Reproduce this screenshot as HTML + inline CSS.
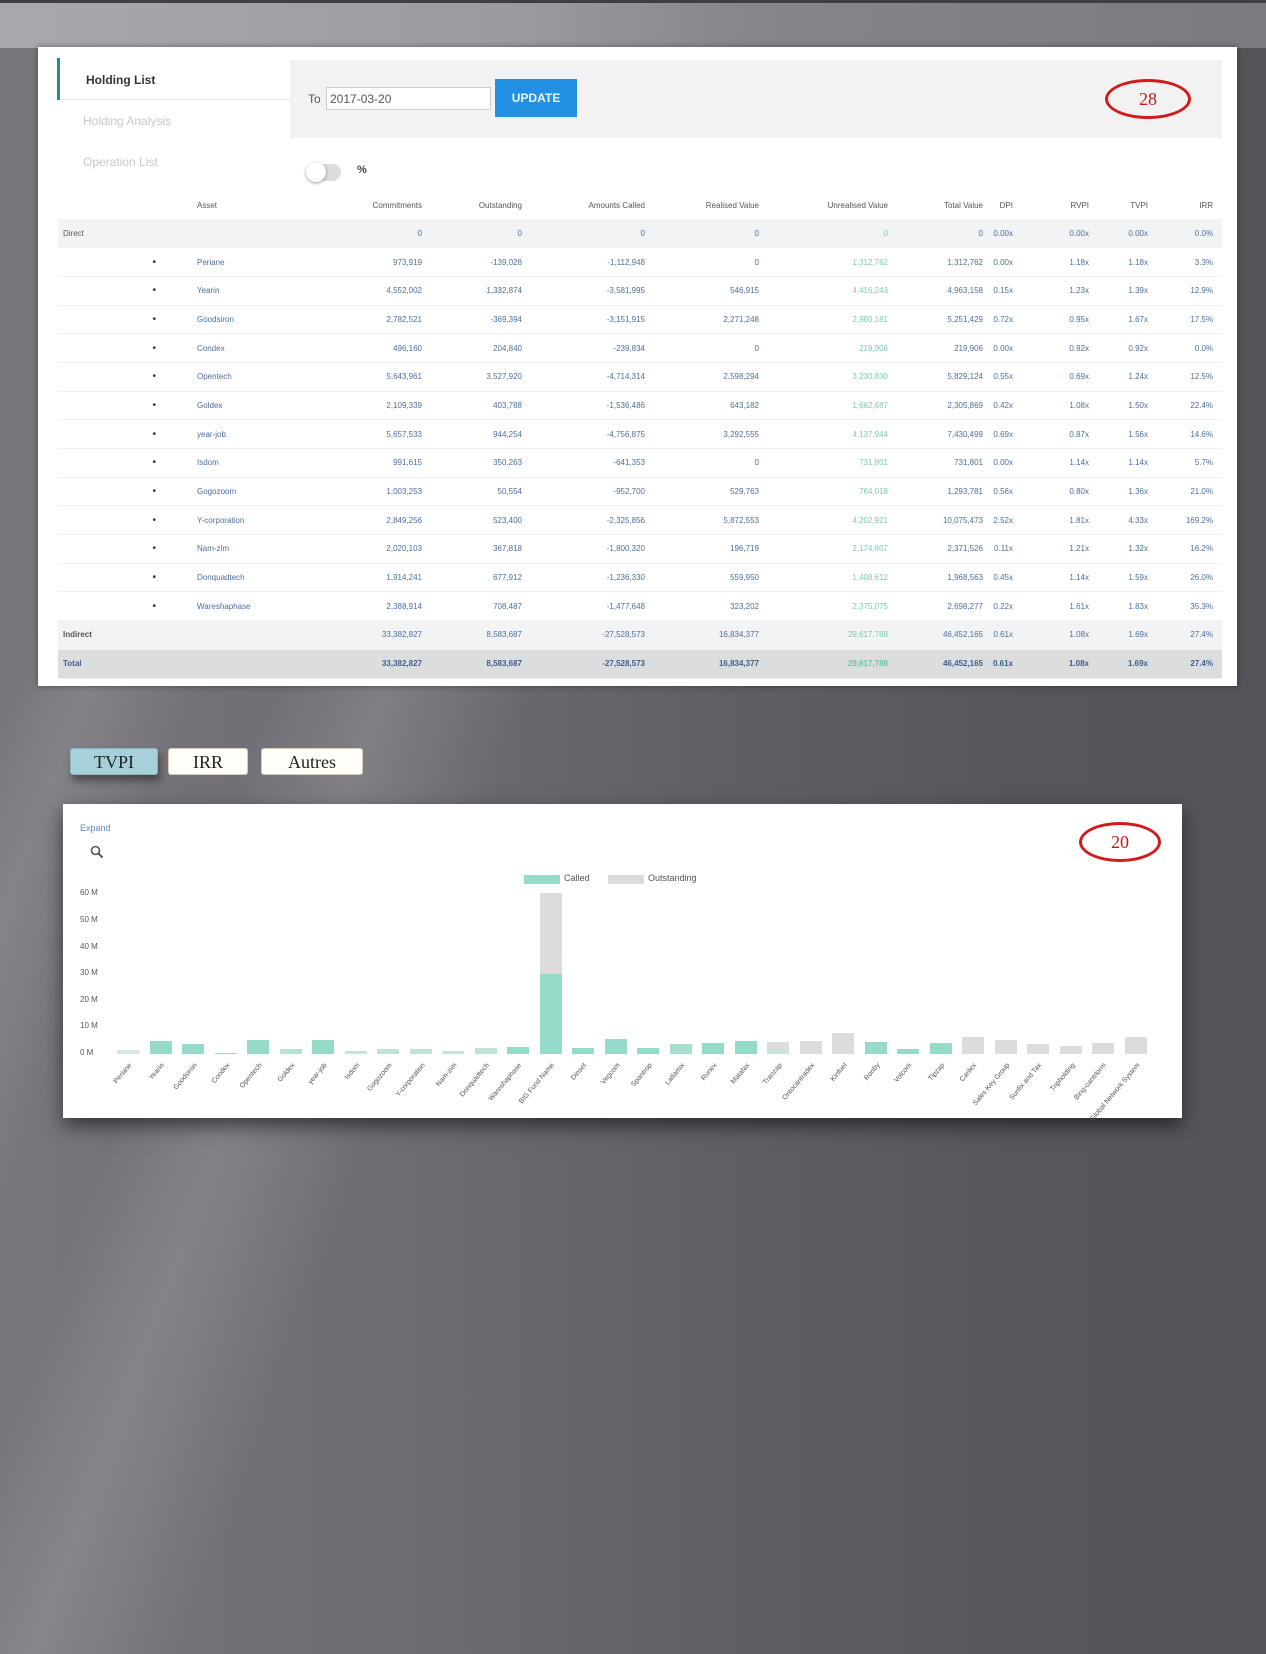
<!DOCTYPE html>
<html><head><meta charset="utf-8"><style>
*{margin:0;padding:0;box-sizing:border-box}
html,body{width:1266px;height:1654px;overflow:hidden}
body{position:relative;font-family:"Liberation Sans",sans-serif;
background:
linear-gradient(110deg,rgba(255,255,255,0) 0%,rgba(255,255,255,0) 14%,rgba(255,255,255,0.10) 18%,rgba(255,255,255,0) 24%,rgba(255,255,255,0) 28%,rgba(255,255,255,0.12) 34%,rgba(255,255,255,0) 42%),
linear-gradient(90deg,#78767c 0%,#6f6d73 30%,#616066 55%,#58565c 80%,#56545a 100%);}
.topband{position:absolute;left:0;top:0;width:1266px;height:48px;background:linear-gradient(90deg,#a9a8ac 0%,#9c9ba0 40%,#86858a 60%,#7b7a7f 100%);border-top:3px solid #3f3e43}
.abs{position:absolute}
.card{position:absolute;left:38px;top:47px;width:1199px;height:639px;background:#fff;box-shadow:0 0 6px rgba(0,0,0,.4)}
.nav{position:absolute;font-size:12px}
table{position:absolute;left:58px;top:191px;width:1164px;border-collapse:collapse;table-layout:fixed;font-size:8px;color:#4d6e99}
td{height:28.7px;text-align:right;white-space:nowrap;overflow:visible;border-bottom:1px solid #eef0f2}
td.l{text-align:left;padding-left:5px;color:#555}
td.a{text-align:left;padding-left:9px}
td.d{text-align:right;padding-right:32px;color:#333;font-size:10px}
td.u{color:#7cc9b6}
tr.h td{color:#555;font-size:8px;height:28px;border-bottom:none}
tr.g td{background:#f2f3f4}
tr.t td{background:#dcdddf;font-weight:bold;color:#3f5f8a}
tr.t td.u{color:#6cc2ad}
.btn{position:absolute;height:27px;font-family:"Liberation Serif",serif;font-size:18px;text-align:center;line-height:26px;color:#222;background:#fffdf8;border:1px solid #d8cdb0;border-radius:3px}
.chart{position:absolute;left:63px;top:804px;width:1119px;height:314px;background:#fff;box-shadow:0 8px 18px rgba(0,0,0,.55)}
.yl{position:absolute;left:80px;font-size:8px;color:#555}
.bar{position:absolute;width:22px}
.lab{position:absolute;font-size:7px;color:#555;transform:rotate(-50deg);transform-origin:right top;white-space:nowrap}
.ell{position:absolute;border:3px solid #d21a1a;border-radius:50%;color:#c81a1a;font-family:"Liberation Serif",serif;font-size:18px;text-align:center}
</style></head><body>
<div class="topband"></div>
<div class="card"></div>
<div class="abs" style="left:57px;top:58px;width:3px;height:42px;background:#2a8a8a"></div>
<div class="abs" style="left:60px;top:99px;width:230px;height:1px;background:#e6e6e6"></div>
<div class="nav" style="left:86px;top:73px;color:#333;font-weight:bold">Holding List</div>
<div class="nav" style="left:83px;top:114px;color:#c4c8cc">Holding Analysis</div>
<div class="nav" style="left:83px;top:155px;color:#c4c8cc">Operation List</div>
<div class="abs" style="left:290px;top:60px;width:932px;height:78px;background:#f2f2f3"></div>
<div class="abs" style="left:308px;top:92px;font-size:12px;color:#555">To</div>
<div class="abs" style="left:326px;top:87px;width:165px;height:23px;background:#fff;border:1px solid #ccc;font-size:12px;color:#555;padding:4px 3px">2017-03-20</div>
<div class="abs" style="left:495px;top:79px;width:82px;height:38px;background:#2391e3;color:#e8f4ff;font-size:12px;font-weight:bold;text-align:center;line-height:38px">UPDATE</div>
<div class="ell" style="left:1105px;top:79px;width:86px;height:40px;line-height:34px">28</div>
<div class="abs" style="left:307px;top:164px;width:34px;height:17px;border-radius:9px;background:#ddd"></div>
<div class="abs" style="left:306px;top:162px;width:20px;height:20px;border-radius:50%;background:#fff;box-shadow:0 1px 3px rgba(0,0,0,.4)"></div>
<div class="abs" style="left:357px;top:164px;font-size:11px;color:#444;font-weight:bold">%</div>
<table>
<colgroup><col style="width:130px"><col style="width:160px"><col style="width:74px"><col style="width:100px"><col style="width:123px"><col style="width:114px"><col style="width:129px"><col style="width:95px"><col style="width:30px"><col style="width:76px"><col style="width:59px"><col style="width:65px"><col style="width:9px"></colgroup>
<tr class="h"><td></td><td class="a">Asset</td><td>Commitments</td><td>Outstanding</td><td>Amounts Called</td><td>Realised Value</td><td>Unrealised Value</td><td>Total Value</td><td>DPI</td><td>RVPI</td><td>TVPI</td><td>IRR</td><td></td></tr>
<tr class="g"><td class="l">Direct</td><td></td><td>0</td><td>0</td><td>0</td><td>0</td><td class="u">0</td><td>0</td><td>0.00x</td><td>0.00x</td><td>0.00x</td><td>0.0%</td><td></td></tr>
<tr><td class="d">•</td><td class="a">Periane</td><td>973,919</td><td>-139,028</td><td>-1,112,948</td><td>0</td><td class="u">1,312,762</td><td>1,312,762</td><td>0.00x</td><td>1.18x</td><td>1.18x</td><td>3.3%</td><td></td></tr>
<tr><td class="d">•</td><td class="a">Yearin</td><td>4,552,002</td><td>1,332,874</td><td>-3,581,995</td><td>546,915</td><td class="u">4,416,243</td><td>4,963,158</td><td>0.15x</td><td>1.23x</td><td>1.39x</td><td>12.9%</td><td></td></tr>
<tr><td class="d">•</td><td class="a">Goodsiron</td><td>2,782,521</td><td>-369,394</td><td>-3,151,915</td><td>2,271,248</td><td class="u">2,980,181</td><td>5,251,429</td><td>0.72x</td><td>0.95x</td><td>1.67x</td><td>17.5%</td><td></td></tr>
<tr><td class="d">•</td><td class="a">Condex</td><td>496,160</td><td>204,840</td><td>-239,834</td><td>0</td><td class="u">219,906</td><td>219,906</td><td>0.00x</td><td>0.92x</td><td>0.92x</td><td>0.0%</td><td></td></tr>
<tr><td class="d">•</td><td class="a">Opentech</td><td>5,643,961</td><td>3,527,920</td><td>-4,714,314</td><td>2,598,294</td><td class="u">3,230,830</td><td>5,829,124</td><td>0.55x</td><td>0.69x</td><td>1.24x</td><td>12.5%</td><td></td></tr>
<tr><td class="d">•</td><td class="a">Goldex</td><td>2,109,339</td><td>403,788</td><td>-1,536,486</td><td>643,182</td><td class="u">1,662,687</td><td>2,305,869</td><td>0.42x</td><td>1.08x</td><td>1.50x</td><td>22.4%</td><td></td></tr>
<tr><td class="d">•</td><td class="a">year-job</td><td>5,657,533</td><td>944,254</td><td>-4,756,875</td><td>3,292,555</td><td class="u">4,137,944</td><td>7,430,499</td><td>0.69x</td><td>0.87x</td><td>1.56x</td><td>14.6%</td><td></td></tr>
<tr><td class="d">•</td><td class="a">Isdom</td><td>991,615</td><td>350,263</td><td>-641,353</td><td>0</td><td class="u">731,801</td><td>731,801</td><td>0.00x</td><td>1.14x</td><td>1.14x</td><td>5.7%</td><td></td></tr>
<tr><td class="d">•</td><td class="a">Gogozoom</td><td>1,003,253</td><td>50,554</td><td>-952,700</td><td>529,763</td><td class="u">764,018</td><td>1,293,781</td><td>0.56x</td><td>0.80x</td><td>1.36x</td><td>21.0%</td><td></td></tr>
<tr><td class="d">•</td><td class="a">Y-corporation</td><td>2,849,256</td><td>523,400</td><td>-2,325,856</td><td>5,872,553</td><td class="u">4,202,921</td><td>10,075,473</td><td>2.52x</td><td>1.81x</td><td>4.33x</td><td>169.2%</td><td></td></tr>
<tr><td class="d">•</td><td class="a">Nam-zim</td><td>2,020,103</td><td>367,818</td><td>-1,800,320</td><td>196,719</td><td class="u">2,174,807</td><td>2,371,526</td><td>0.11x</td><td>1.21x</td><td>1.32x</td><td>16.2%</td><td></td></tr>
<tr><td class="d">•</td><td class="a">Donquadtech</td><td>1,914,241</td><td>677,912</td><td>-1,236,330</td><td>559,950</td><td class="u">1,408,612</td><td>1,968,563</td><td>0.45x</td><td>1.14x</td><td>1.59x</td><td>26.0%</td><td></td></tr>
<tr><td class="d">•</td><td class="a">Wareshaphase</td><td>2,388,914</td><td>708,487</td><td>-1,477,648</td><td>323,202</td><td class="u">2,375,075</td><td>2,698,277</td><td>0.22x</td><td>1.61x</td><td>1.83x</td><td>35.3%</td><td></td></tr>
<tr class="g"><td class="l" style="font-weight:bold">Indirect</td><td></td><td>33,382,827</td><td>8,583,687</td><td>-27,528,573</td><td>16,834,377</td><td class="u">29,617,788</td><td>46,452,165</td><td>0.61x</td><td>1.08x</td><td>1.69x</td><td>27.4%</td><td></td></tr>
<tr class="t"><td class="l" style="font-weight:bold">Total</td><td></td><td>33,382,827</td><td>8,583,687</td><td>-27,528,573</td><td>16,834,377</td><td class="u">29,617,788</td><td>46,452,165</td><td>0.61x</td><td>1.08x</td><td>1.69x</td><td>27.4%</td><td></td></tr>
</table>

<div class="btn" style="left:70px;top:748px;width:88px;background:#a6d0da;border-color:#8fb4be;box-shadow:2px 6px 8px rgba(0,0,0,.4)">TVPI</div>
<div class="btn" style="left:168px;top:748px;width:80px">IRR</div>
<div class="btn" style="left:261px;top:748px;width:102px">Autres</div>

<div class="chart"></div>
<div class="abs" style="left:80px;top:823px;font-size:9px;color:#5a8bc4">Expand</div>
<svg class="abs" style="left:90px;top:845px" width="14" height="14" viewBox="0 0 14 14"><circle cx="5.5" cy="5.5" r="4" fill="none" stroke="#555" stroke-width="1.6"/><line x1="8.5" y1="8.5" x2="12.5" y2="12.5" stroke="#555" stroke-width="2"/></svg>
<div class="ell" style="left:1079px;top:822px;width:82px;height:40px;line-height:34px">20</div>
<div class="abs" style="left:524px;top:875px;width:36px;height:9px;background:#96dbc9"></div>
<div class="abs" style="left:564px;top:873px;font-size:9px;color:#555">Called</div>
<div class="abs" style="left:608px;top:875px;width:36px;height:9px;background:#dcdcdc"></div>
<div class="abs" style="left:648px;top:873px;font-size:9px;color:#555">Outstanding</div>
<div class="yl" style="top:888px">60 M</div>
<div class="yl" style="top:915px">50 M</div>
<div class="yl" style="top:942px">40 M</div>
<div class="yl" style="top:968px">30 M</div>
<div class="yl" style="top:995px">20 M</div>
<div class="yl" style="top:1021px">10 M</div>
<div class="yl" style="top:1048px">0 M</div>
<svg class="abs" style="left:0;top:0" width="1266" height="1654">
<g>
<rect x="117" y="1050" width="22" height="4" fill="#d4e9e3"/>
<rect x="150" y="1041" width="22" height="13" fill="#96dbc9"/>
<rect x="182" y="1044" width="22" height="10" fill="#96dbc9"/>
<rect x="215" y="1053" width="22" height="1" fill="#96dbc9"/>
<rect x="247" y="1040" width="22" height="14" fill="#96dbc9"/>
<rect x="280" y="1049" width="22" height="5" fill="#b9e3d7"/>
<rect x="312" y="1040" width="22" height="14" fill="#96dbc9"/>
<rect x="345" y="1051" width="22" height="3" fill="#c6e4dc"/>
<rect x="377" y="1049" width="22" height="5" fill="#bfe3d9"/>
<rect x="410" y="1049" width="22" height="5" fill="#bfe3d9"/>
<rect x="442" y="1051" width="22" height="3" fill="#c6e4dc"/>
<rect x="475" y="1048" width="22" height="6" fill="#bfe3d9"/>
<rect x="507" y="1047" width="22" height="7" fill="#96dbc9"/>
<rect x="540" y="893" width="22" height="81" fill="#dcdcdc"/>
<rect x="540" y="974" width="22" height="80" fill="#96dbc9"/>
<rect x="572" y="1048" width="22" height="6" fill="#96dbc9"/>
<rect x="605" y="1039" width="22" height="15" fill="#96dbc9"/>
<rect x="637" y="1048" width="22" height="6" fill="#96dbc9"/>
<rect x="670" y="1044" width="22" height="10" fill="#aadfd0"/>
<rect x="702" y="1043" width="22" height="11" fill="#96dbc9"/>
<rect x="735" y="1041" width="22" height="13" fill="#96dbc9"/>
<rect x="767" y="1042" width="22" height="12" fill="#dcdcdc"/>
<rect x="767" y="1050" width="22" height="4" fill="#c7e3dc"/>
<rect x="800" y="1041" width="22" height="13" fill="#dcdcdc"/>
<rect x="832" y="1033" width="22" height="21" fill="#dcdcdc"/>
<rect x="865" y="1042" width="22" height="12" fill="#96dbc9"/>
<rect x="897" y="1049" width="22" height="5" fill="#96dbc9"/>
<rect x="930" y="1043" width="22" height="11" fill="#96dbc9"/>
<rect x="962" y="1037" width="22" height="17" fill="#dcdcdc"/>
<rect x="995" y="1040" width="22" height="14" fill="#dcdcdc"/>
<rect x="1027" y="1044" width="22" height="10" fill="#dcdcdc"/>
<rect x="1060" y="1046" width="22" height="8" fill="#dcdcdc"/>
<rect x="1092" y="1043" width="22" height="11" fill="#dcdcdc"/>
<rect x="1125" y="1037" width="22" height="17" fill="#dcdcdc"/>
</g>
</svg>
<div class="lab" style="right:1138px;top:1062px">Periane</div>
<div class="lab" style="right:1105px;top:1062px">Yearin</div>
<div class="lab" style="right:1073px;top:1062px">Goodsiron</div>
<div class="lab" style="right:1040px;top:1062px">Condex</div>
<div class="lab" style="right:1008px;top:1062px">Opentech</div>
<div class="lab" style="right:975px;top:1062px">Goldex</div>
<div class="lab" style="right:943px;top:1062px">year-job</div>
<div class="lab" style="right:910px;top:1062px">Isdom</div>
<div class="lab" style="right:878px;top:1062px">Gogozoom</div>
<div class="lab" style="right:845px;top:1062px">Y-corporation</div>
<div class="lab" style="right:813px;top:1062px">Nam-zim</div>
<div class="lab" style="right:780px;top:1062px">Donquadtech</div>
<div class="lab" style="right:748px;top:1062px">Wareshaphase</div>
<div class="lab" style="right:715px;top:1062px">BIG Fund Name</div>
<div class="lab" style="right:683px;top:1062px">Dinset</div>
<div class="lab" style="right:650px;top:1062px">Vegcom</div>
<div class="lab" style="right:618px;top:1062px">Spantrop</div>
<div class="lab" style="right:585px;top:1062px">Latlamix</div>
<div class="lab" style="right:553px;top:1062px">Runex</div>
<div class="lab" style="right:520px;top:1062px">Matafax</div>
<div class="lab" style="right:488px;top:1062px">Tranzap</div>
<div class="lab" style="right:455px;top:1062px">Ontocantradex</div>
<div class="lab" style="right:423px;top:1062px">Kinfuel</div>
<div class="lab" style="right:390px;top:1062px">Ronby</div>
<div class="lab" style="right:358px;top:1062px">Volcom</div>
<div class="lab" style="right:325px;top:1062px">Tipzap</div>
<div class="lab" style="right:293px;top:1062px">Canlex</div>
<div class="lab" style="right:260px;top:1062px">Sales Key Group</div>
<div class="lab" style="right:228px;top:1062px">Sunfix and Tax</div>
<div class="lab" style="right:195px;top:1062px">Tripholding</div>
<div class="lab" style="right:163px;top:1062px">Bing-cantrlorm</div>
<div class="lab" style="right:130px;top:1062px">Global Network System</div>
</body></html>
